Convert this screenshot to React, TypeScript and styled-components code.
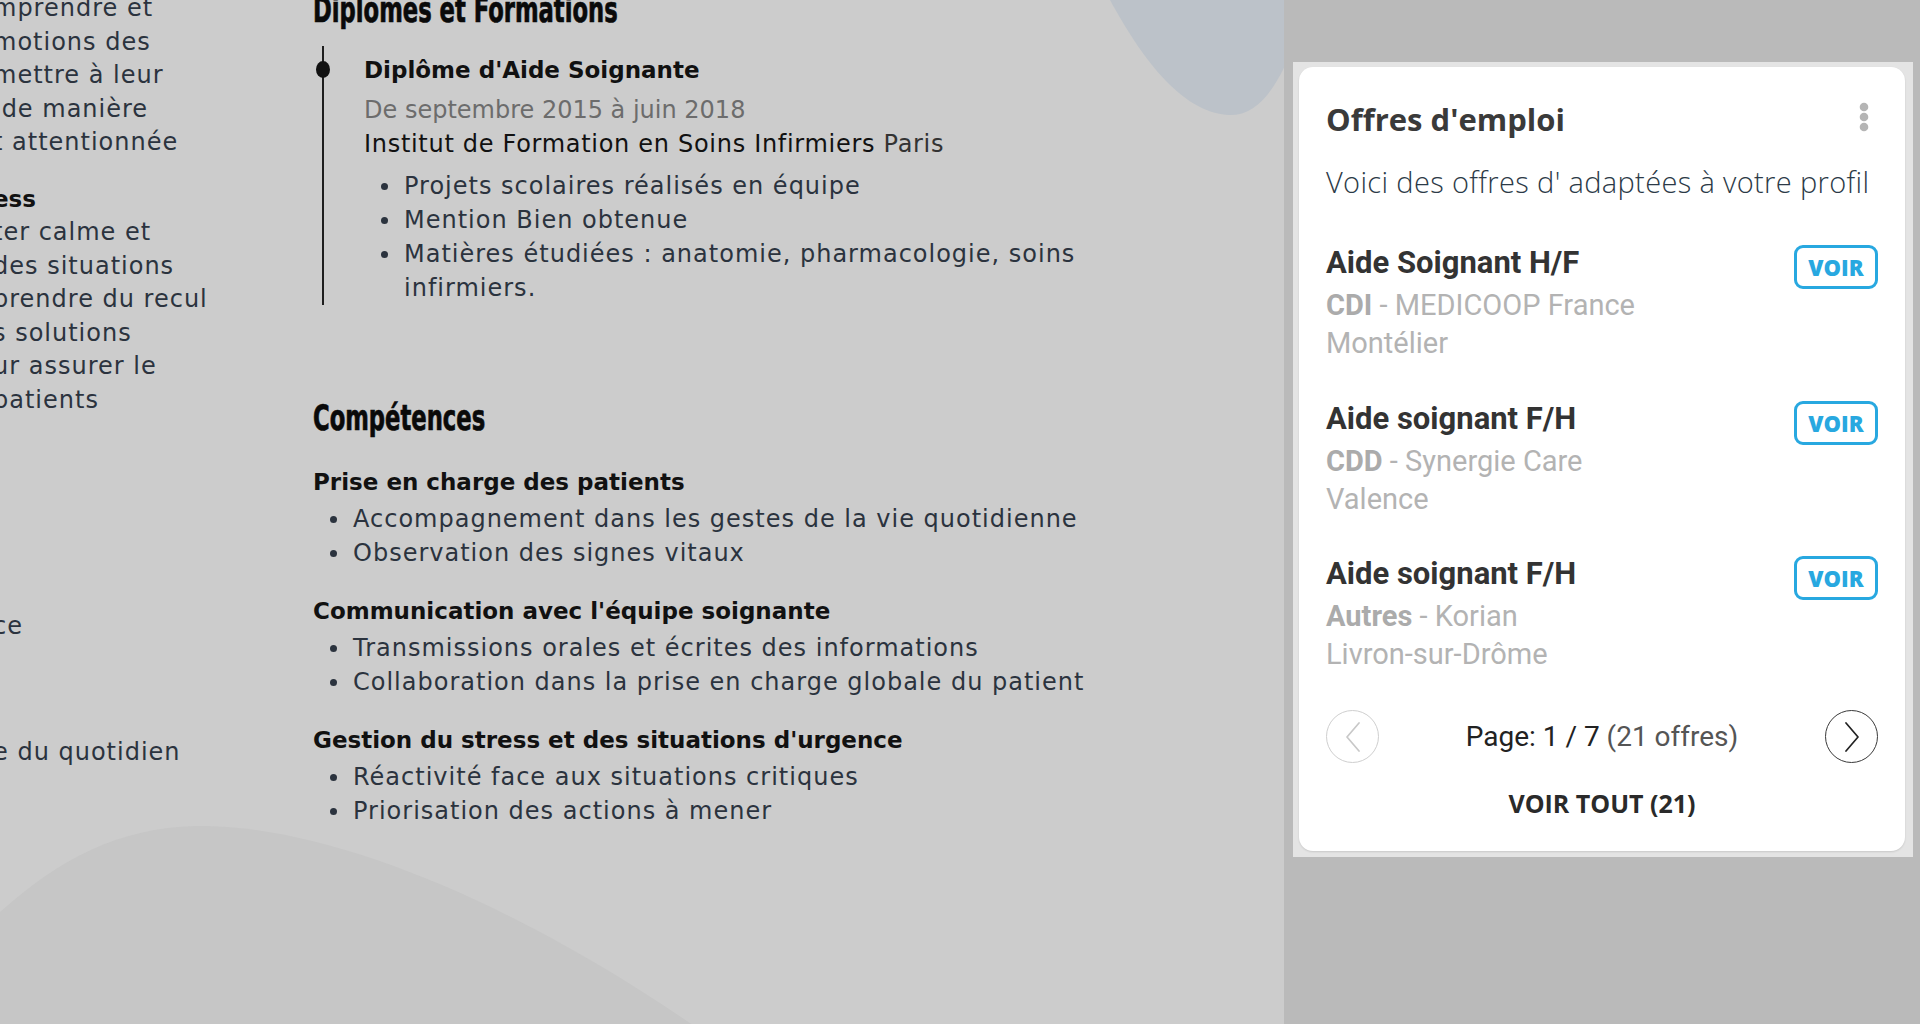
import React from "react";
import styled, { createGlobalStyle } from "styled-components";

const GlobalStyle = createGlobalStyle`
  html, body { margin: 0; padding: 0; }
  body {
    width: 1920px;
    height: 1024px;
    overflow: hidden;
    background: #bababa;
  }
  *, *::before, *::after { box-sizing: border-box; }
`;

const Screen = styled.div`
  display: flex;
  width: 1920px;
  height: 1024px;
  overflow: hidden;
`;

/* ---------- CV (dimmed page) ---------- */

const CvArea = styled.div`
  position: relative;
  flex: 0 0 1284px;
  height: 100%;
  background: #cccccc;
  overflow: hidden;
  display: grid;
  grid-template-columns: 220px 820px;
  column-gap: 93px;
  align-items: start;
`;

const Decor = styled.svg`
  position: absolute;
  inset: 0;
  width: 1284px;
  height: 1024px;
  z-index: 0;
`;

const Sidebar = styled.div`
  position: relative;
  z-index: 1;
  margin-left: -7px;
  margin-top: -8px;
  font-family: "DejaVu Sans", sans-serif;
  font-size: 24px;
  letter-spacing: 1px;
  line-height: 33.5px;
  color: #2b333e;
  white-space: nowrap;
`;

const SideBlock = styled.div<{ $gap: number }>`
  margin-top: ${(p) => p.$gap}px;
`;

const SideTitle = styled.div`
  font-weight: 700;
  font-size: 23px;
  letter-spacing: 0;
  color: #111;
`;

const Main = styled.main`
  position: relative;
  z-index: 1;
  margin-top: -10px;
  font-family: "DejaVu Sans", sans-serif;
  font-size: 24px;
  letter-spacing: 1px;
  line-height: 34px;
  color: #2b333e;
`;

const SectionTitle = styled.h2<{ $mt?: number }>`
  margin: ${(p) => p.$mt ?? 0}px 0 0;
  font-family: "DejaVu Sans Condensed", "DejaVu Sans", sans-serif;
  font-stretch: condensed;
  font-weight: 700;
  font-size: 35px;
  line-height: 40px;
  letter-spacing: 0;
  color: #0a0a0a;
  white-space: nowrap;
  transform: scaleX(0.72);
  transform-origin: left center;
  -webkit-text-stroke: 0.7px #0a0a0a;
`;

const Timeline = styled.div`
  position: relative;
  margin: 16px 0 0 9px;
  border-left: 2px solid #1e1e1e;
  padding: 7px 0 0 40px;
`;

const TimelineDot = styled.span`
  position: absolute;
  left: -8px;
  top: 15px;
  width: 14px;
  height: 17px;
  border-radius: 50%;
  background: #111;
`;

const ItemTitle = styled.div`
  font-weight: 700;
  font-size: 23px;
  letter-spacing: 0;
  color: #111;
`;

const ItemDate = styled.div`
  margin-top: 6px;
  letter-spacing: 0;
  color: #6c6c6c;
`;

const ItemPlace = styled.div`
  letter-spacing: 0.7px;
  color: #111;
  span {
    color: #333;
  }
`;

const BulletList = styled.ul<{ $mt: number }>`
  list-style: none;
  margin: ${(p) => p.$mt}px 0 0;
  padding: 0 0 0 40px;
`;

const Bullet = styled.li`
  position: relative;
  &::before {
    content: "";
    position: absolute;
    left: -23px;
    top: 14px;
    width: 7px;
    height: 7px;
    border-radius: 50%;
    background: #2b333e;
  }
`;

const SkillTitle = styled.h3<{ $mt: number }>`
  margin: ${(p) => p.$mt}px 0 0;
  font-weight: 700;
  font-size: 23px;
  line-height: 34px;
  letter-spacing: 0;
  color: #111;
`;

/* ---------- Jobs widget ---------- */

const Panel = styled.aside`
  flex: 1;
  height: 100%;
  background: #bababa;
  padding: 62px 0 0 9px;
`;

const Frame = styled.div`
  width: 620px;
  background: #e4e4e4;
  padding: 5px 8px 6px 6px;
`;

const Card = styled.section`
  background: #ffffff;
  border-radius: 14px;
  padding: 34px 27px 33px;
  box-shadow: 0 1px 2px rgba(0, 0, 0, 0.12);
`;

const CardHeader = styled.div`
  display: flex;
  align-items: center;
  justify-content: space-between;
  height: 36px;
`;

const CardTitle = styled.h2`
  margin: 0;
  font-family: "Open Sans", sans-serif;
  font-weight: 700;
  font-size: 31px;
  line-height: 36px;
  color: #3a3a3a;
`;

const Kebab = styled.button`
  display: flex;
  border: 0;
  padding: 0;
  background: none;
`;

const CardIntro = styled.p`
  margin: 29px 0 0;
  font-family: "Open Sans", sans-serif;
  font-weight: 300;
  font-size: 29px;
  letter-spacing: 0.35px;
  line-height: 32px;
  color: #2c3a47;
  white-space: nowrap;
`;

const JobList = styled.div`
  margin-top: 47px;
  display: flex;
  flex-direction: column;
  gap: 38.5px;
`;

const JobRow = styled.article`
  display: grid;
  grid-template-columns: 1fr auto;
  align-items: start;
`;

const JobTitle = styled.h3`
  margin: 0;
  font-family: Roboto, sans-serif;
  font-weight: 700;
  font-size: 31px;
  line-height: 36px;
  color: #333;
`;

const JobMeta = styled.div<{ $mt?: number }>`
  margin-top: ${(p) => p.$mt ?? 0}px;
  font-family: Roboto, sans-serif;
  font-size: 29px;
  line-height: 38px;
  color: #b3b3b3;
  strong {
    font-weight: 700;
    color: #ababab;
  }
`;

const VoirButton = styled.button`
  width: 84px;
  height: 44px;
  display: flex;
  align-items: center;
  justify-content: center;
  border: 3px solid #28a8e0;
  border-radius: 9px;
  background: #fff;
  color: #28a8e0;
  font-family: "Open Sans", sans-serif;
  font-weight: 800;
  font-size: 22px;
  padding: 0;
`;

const Pager = styled.div`
  margin-top: 37px;
  height: 53px;
  display: flex;
  align-items: center;
  justify-content: space-between;
`;

const PageCircle = styled.button<{ $active: boolean }>`
  width: 53px;
  height: 53px;
  border-radius: 50%;
  border: 1.5px solid ${(p) => (p.$active ? "#3a3a3a" : "#cfcfcf")};
  background: #fff;
  color: ${(p) => (p.$active ? "#222" : "#c8c8c8")};
  display: flex;
  align-items: center;
  justify-content: center;
  padding: 0;
`;

const PageInfo = styled.div`
  font-family: Roboto, sans-serif;
  font-size: 28px;
  line-height: 53px;
  color: #222;
  span {
    color: #555;
  }
`;

const SeeAll = styled.div`
  margin-top: 25px;
  text-align: center;
  font-family: "Open Sans", sans-serif;
  font-weight: 700;
  font-size: 25px;
  line-height: 30px;
  color: #2a2a2a;
`;

const Chevron = ({ dir }: { dir: "left" | "right" }) => (
  <svg width="16" height="30" viewBox="0 0 16 30" fill="none">
    <polyline
      points={dir === "left" ? "14,1 2,15 14,29" : "2,1 14,15 2,29"}
      stroke="currentColor"
      strokeWidth="1.7"
      strokeLinecap="round"
      strokeLinejoin="round"
    />
  </svg>
);

const jobs = [
  { title: "Aide Soignant H/F", type: "CDI", company: "MEDICOOP France", city: "Montélier" },
  { title: "Aide soignant F/H", type: "CDD", company: "Synergie Care", city: "Valence" },
  { title: "Aide soignant F/H", type: "Autres", company: "Korian", city: "Livron-sur-Drôme" },
];

export default function App() {
  return (
    <>
      <GlobalStyle />
      <Screen>
        <CvArea>
          <Decor viewBox="0 0 1284 1024" aria-hidden="true">
            <path
              d="M1110 0 C1140 55 1180 112 1228 115 C1255 116 1272 95 1290 55 L1290 0 Z"
              fill="#bcc2c9"
            />
            <path
              d="M0 912 C60 858 120 828 195 826 C330 824 520 905 700 1030 L0 1030 Z"
              fill="#c6c6c6"
            />
          </Decor>

          <Sidebar>
            <SideBlock $gap={0}>
              <div>mprendre et</div>
              <div>motions des</div>
              <div>mettre à leur</div>
              <div>&nbsp;de manière</div>
              <div>t attentionnée</div>
            </SideBlock>
            <SideBlock $gap={23}>
              <SideTitle>ess</SideTitle>
              <div>ter calme et</div>
              <div>des situations</div>
              <div>prendre du recul</div>
              <div>s solutions</div>
              <div>ur assurer le</div>
              <div>patients</div>
            </SideBlock>
            <SideBlock $gap={193}>
              <div>ce</div>
            </SideBlock>
            <SideBlock $gap={92}>
              <div>e du quotidien</div>
            </SideBlock>
          </Sidebar>

          <Main>
            <SectionTitle>Diplomes et Formations</SectionTitle>
            <Timeline>
              <TimelineDot />
              <ItemTitle>Diplôme d'Aide Soignante</ItemTitle>
              <ItemDate>De septembre 2015 à juin 2018</ItemDate>
              <ItemPlace>
                Institut de Formation en Soins Infirmiers <span>Paris</span>
              </ItemPlace>
              <BulletList $mt={8}>
                <Bullet>Projets scolaires réalisés en équipe</Bullet>
                <Bullet>Mention Bien obtenue</Bullet>
                <Bullet>Matières étudiées : anatomie, pharmacologie, soins infirmiers.</Bullet>
              </BulletList>
            </Timeline>

            <SectionTitle $mt={93}>Compétences</SectionTitle>
            <SkillTitle $mt={26.5}>Prise en charge des patients</SkillTitle>
            <BulletList $mt={3}>
              <Bullet>Accompagnement dans les gestes de la vie quotidienne</Bullet>
              <Bullet>Observation des signes vitaux</Bullet>
            </BulletList>
            <SkillTitle $mt={24}>Communication avec l'équipe soignante</SkillTitle>
            <BulletList $mt={3}>
              <Bullet>Transmissions orales et écrites des informations</Bullet>
              <Bullet>Collaboration dans la prise en charge globale du patient</Bullet>
            </BulletList>
            <SkillTitle $mt={24}>Gestion du stress et des situations d'urgence</SkillTitle>
            <BulletList $mt={3}>
              <Bullet>Réactivité face aux situations critiques</Bullet>
              <Bullet>Priorisation des actions à mener</Bullet>
            </BulletList>
          </Main>
        </CvArea>

        <Panel>
          <Frame>
            <Card>
              <CardHeader>
                <CardTitle>Offres d'emploi</CardTitle>
                <Kebab aria-label="Options">
                  <svg width="28" height="36" viewBox="0 0 28 36">
                    <circle cx="14" cy="6" r="4.3" fill="#b5b5b5" />
                    <circle cx="14" cy="16" r="4.3" fill="#b5b5b5" />
                    <circle cx="14" cy="26" r="4.3" fill="#b5b5b5" />
                  </svg>
                </Kebab>
              </CardHeader>
              <CardIntro>Voici des offres d' adaptées à votre profil</CardIntro>

              <JobList>
                {jobs.map((job, i) => (
                  <JobRow key={i}>
                    <div>
                      <JobTitle>{job.title}</JobTitle>
                      <JobMeta $mt={5}>
                        <strong>{job.type}</strong> - {job.company}
                      </JobMeta>
                      <JobMeta>{job.city}</JobMeta>
                    </div>
                    <VoirButton>VOIR</VoirButton>
                  </JobRow>
                ))}
              </JobList>

              <Pager>
                <PageCircle $active={false} aria-label="Précédent">
                  <Chevron dir="left" />
                </PageCircle>
                <PageInfo>
                  Page: 1 / 7 <span>(21 offres)</span>
                </PageInfo>
                <PageCircle $active={true} aria-label="Suivant">
                  <Chevron dir="right" />
                </PageCircle>
              </Pager>
              <SeeAll>VOIR TOUT (21)</SeeAll>
            </Card>
          </Frame>
        </Panel>
      </Screen>
    </>
  );
}
